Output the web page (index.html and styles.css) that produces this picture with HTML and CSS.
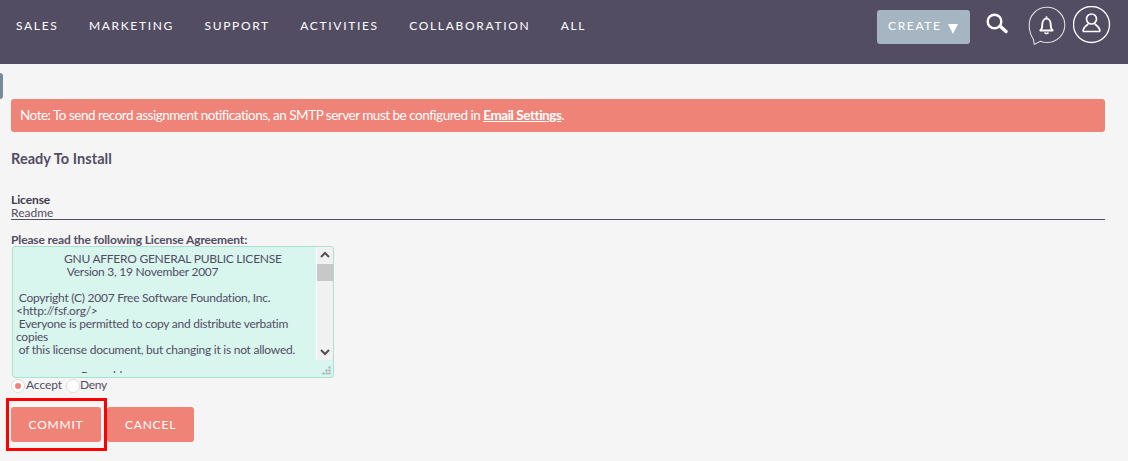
FILE: index.html
```html
<!DOCTYPE html>
<html lang="en">
<head>
<meta charset="utf-8">
<title>Ready To Install</title>
<link rel="stylesheet" href="styles.css">
</head>
<body>
<header class="navbar">
  <nav class="nav-links">
    <a>SALES</a><a>MARKETING</a><a>SUPPORT</a><a>ACTIVITIES</a><a>COLLABORATION</a><a>ALL</a>
  </nav>
  <div class="nav-tools">
    <button class="create">CREATE<span class="caret"></span></button>
    <svg class="search" width="22" height="21" viewBox="0 0 22 21" fill="none" stroke="#fff"><circle cx="8.500" cy="8.500" r="6.800" stroke-width="2.400"/><path d="M14.500 13.500l5.500 5" stroke-width="3.400" stroke-linecap="round"/></svg>
    <svg class="bell" width="38" height="40" viewBox="0 0 38 40" fill="none" stroke="#fff"><path d="M5.500 33.500l.8 5 6-3.200C14.400 36 16.500 36.500 19 36.500c9.900 0 17.800-7.800 17.800-17.500S28.900 1.300 19 1.300 1.200 9.300 1.200 19c0 5.800 1.700 10.700 4.300 14.500z" stroke="#ddd" stroke-width="1.100"/><path d="M12.300 24.500c1.500-1.300 2-3 2-6 0-3.500 1.800-5.800 4.200-5.800s4.200 2.300 4.200 5.800c0 3 .5 4.700 2 6z" stroke-width="1.800" stroke-linejoin="round"/><path d="M16.700 26.500c.4 1.400 3.200 1.400 3.600 0" stroke-width="1.600"/><circle cx="18.500" cy="11.300" r="1" fill="#fff" stroke="none"/></svg>
    <svg class="user" width="38" height="38" viewBox="0 0 38 38" fill="none" stroke="#fff"><circle cx="18.500" cy="18.500" r="18" stroke-width="1.300"/><circle cx="18.500" cy="13" r="5" stroke-width="1.700"/><path d="M10 25.500c0-4 3-6 5.300-7.500M27 25.500c0-4-3-6-5.300-7.500M10 25.500h17" stroke-width="1.700" stroke-linejoin="round"/></svg>
  </div>
</header>

<div class="side-tab"></div>

<main class="content">
  <div class="notice">Note: To send record assignment notifications, an SMTP server must be configured in <a>Email Settings</a>.</div>
  <h2 class="title">Ready To Install</h2>
  <div class="tabs">
    <div class="tab-active">License</div>
    <div class="tab">Readme</div>
  </div>
  <p class="lead">Please read the following License Agreement:</p>
  <div class="license">
    <div class="license-text">                 GNU AFFERO GENERAL PUBLIC LICENSE
                  Version 3, 19 November 2007

 Copyright (C) 2007 Free Software Foundation, Inc. &lt;http://fsf.org/&gt;
 Everyone is permitted to copy and distribute verbatim copies
 of this license document, but changing it is not allowed.

                       Preamble</div>
    <div class="scrollbar">
      <svg class="arrow" width="16" height="16" viewBox="0 0 16 16" fill="none" stroke="#505050" stroke-width="2"><path d="M4 10l4-4 4 4"/></svg>
      <div class="thumb"></div>
      <svg class="arrow arrow-down" width="16" height="16" viewBox="0 0 16 16" fill="none" stroke="#505050" stroke-width="2"><path d="M4 6l4 4 4-4"/></svg>
    </div>
    <svg class="grip" width="9" height="9" viewBox="0 0 9 9" fill="#aaa"><rect x="6.500" y="0.500" width="2" height="2"/><rect x="3.500" y="3.500" width="2" height="2"/><rect x="6.500" y="3.500" width="2" height="2"/><rect x="0.500" y="6.500" width="2" height="2"/><rect x="3.500" y="6.500" width="2" height="2"/><rect x="6.500" y="6.500" width="2" height="2"/></svg>
  </div>
  <div class="choices">
    <span class="radio radio-on"></span><span class="choice">Accept</span>
    <span class="radio"></span><span class="choice choice-last">Deny</span>
  </div>
  <div class="actions">
    <button class="btn">COMMIT</button>
    <button class="btn">CANCEL</button>
  </div>
</main>
<div class="highlight"></div>
</body>
</html>
```
FILE: styles.css
```css
* { box-sizing: border-box; }
html, body { margin: 0; height: 100%; overflow: hidden; }
body { background: #f5f5f5; color: #534d64; font-family: Lato, "Open Sans", sans-serif; font-size: 12px; position: relative; }

.navbar { height: 64px; background: #534d64; display: flex; justify-content: space-between; align-items: flex-start; color: #fff; }
.nav-links { display: flex; gap: 30.400px; padding: 19px 0 0 16px; font-size: 12px; line-height: 14px; letter-spacing: 1.680px; }
.nav-tools { display: flex; align-items: flex-start; padding-right: 17px; }
.create { margin-top: 10px; width: 93px; height: 34px; background: #a5b5c1; border: 0; border-radius: 3px; color: #fff; font: 12px Lato, sans-serif; letter-spacing: 1.650px; padding: 0 0 3px 11px; display: flex; align-items: center; gap: 6px; }
.caret { width: 0; height: 0; border-left: 5px solid transparent; border-right: 5px solid transparent; border-top: 10px solid #fff; margin-top: 6px; }
.search { margin: 13px 0 0 16px; }
.bell { margin: 6px 0 0 20px; }
.user { margin: 6px 0 0 7px; }

.side-tab { position: absolute; left: 0; top: 73px; width: 3px; height: 26px; background: #778b9b; border-radius: 0 3px 3px 0; }

.content { padding: 35px 23px 0 11px; }
.notice { height: 33px; background: #f08377; border-radius: 3px; color: #fff; font-size: 13.500px; line-height: 32px; padding-left: 9px; letter-spacing: -0.495px; }
.notice a { font-weight: 700; text-decoration: underline; letter-spacing: -0.450px; }
.title { margin: 18px 0 0; font-size: 14.500px; line-height: 17px; font-weight: 700; letter-spacing: 0.050px; }
.tabs { margin-top: 26px; border-bottom: 1px solid #534d64; height: 27px; }
.tab-active { font-weight: 700; line-height: 13px; color: #3f3a4d; letter-spacing: -0.100px; }
.tab { line-height: 13px; }
.lead { margin: 13px 0 0; font-weight: 700; line-height: 14px; letter-spacing: -0.130px; }

.license { position: relative; margin: -1px 0 0 1px; width: 322px; height: 132px; background: #d8f5ee; border: 1px solid #a8e2d2; border-radius: 3px; overflow: hidden; }
.license-text { height: 126px; overflow: hidden; padding: 5px 20px 0 3px; white-space: pre-wrap; font-size: 12px; line-height: 13px; letter-spacing: -0.250px; }
.scrollbar { position: absolute; right: 0; top: 0; width: 17px; height: 113px; background: #f1f1f1; border-left: 1px solid #fff; display: flex; flex-direction: column; }
.arrow { display: block; flex: none; }
.thumb { height: 17px; background: #c8c8c8; margin: 1px 0 0; }
.arrow-down { margin-top: auto; }
.grip { position: absolute; right: 2px; bottom: 2px; }

.choices { display: flex; align-items: flex-start; height: 15px; }
.radio { width: 14px; height: 14px; border-radius: 50%; background: #fff; border: 1px solid #ddd; margin-top: 1px; flex: none; position: relative; }
.radio-on::after { content: ""; position: absolute; left: 3px; top: 3px; width: 6px; height: 6px; border-radius: 50%; background: #f08377; }
.choice { margin-left: 1px; margin-right: 4px; line-height: 14px; letter-spacing: -0.100px; }
.choice-last { margin-left: 0; letter-spacing: -0.300px; }

.actions { display: flex; gap: 6px; margin-top: 14px; }
.btn { width: 90px; height: 35px; background: #f08377; border: 0; border-radius: 3px; color: #fff; font: 12px Lato, sans-serif; letter-spacing: 0.800px; }
.btn + .btn { width: 87px; }

.highlight { position: absolute; left: 6px; top: 398px; width: 101px; height: 53px; border: 3px solid #f00; }
```
